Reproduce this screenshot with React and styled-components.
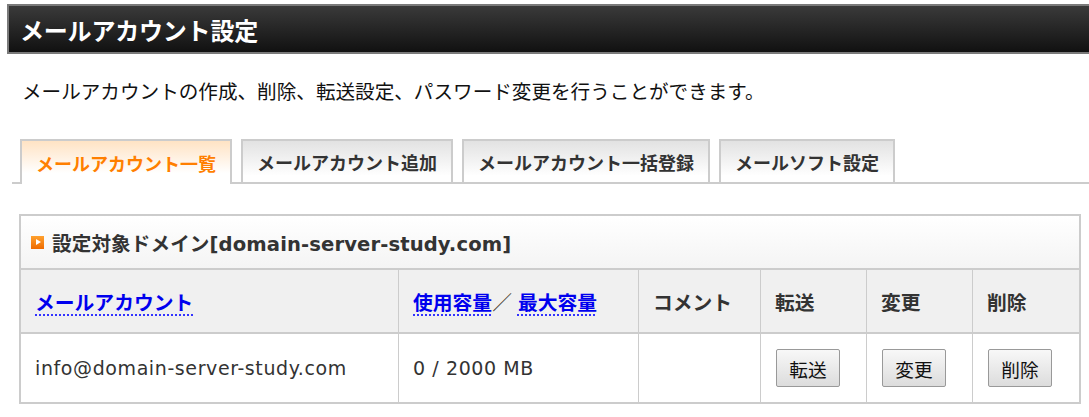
import React from 'react'
import styled, { createGlobalStyle } from 'styled-components'

const GlobalStyle = createGlobalStyle`
  html, body {
    margin: 0;
    padding: 0;
    background: #fff;
    overflow: hidden;
  }
  body {
    font-family: "DejaVu Sans", "Noto Sans CJK JP", sans-serif;
    color: #333;
  }
`

const Page = styled.div`
  width: 1089px;
  padding-top: 4px;
`

const TitleBar = styled.div`
  margin-left: 7px;
  margin-right: -20px;
  height: 46px;
  border: 2px solid #7a7a7a;
  background: linear-gradient(#3a3a3a, #111);
  display: flex;
  align-items: center;
  padding-left: 11px;
`

const Title = styled.h1`
  margin: 0;
  font-family: "Noto Sans CJK JP", sans-serif;
  font-size: 24px;
  font-weight: 700;
  color: #fff;
  letter-spacing: -0.2px;
`

const Lead = styled.p`
  margin: 22px 0 0 22px;
  font-family: "Noto Sans CJK JP", sans-serif;
  font-size: 19.6px;
  color: #111;
  line-height: 30px;
`

const TabBar = styled.div`
  margin: 33px 0 0 12px;
  padding-left: 8px;
  display: flex;
  gap: 9px;
  border-bottom: 2px solid #ccc;
  height: 43px;
`

const Tab = styled.div`
  box-sizing: border-box;
  border: 2px solid #ccc;
  border-bottom: none;
  padding: 0 14px;
  display: flex;
  align-items: center;
  font-family: "Noto Sans CJK JP", sans-serif;
  font-size: 18px;
  font-weight: 700;
  color: ${p => (p.$active ? '#ff7f00' : '#333')};
  background: ${p =>
    p.$active
      ? 'linear-gradient(#ffe3c4, #fff 75%)'
      : 'linear-gradient(#e2e2e2, #fff 85%)'};
  margin-bottom: ${p => (p.$active ? '-2px' : '0')};
  height: ${p => (p.$active ? '45px' : '43px')};
`

const Table = styled.div`
  margin: 30px 0 0 19px;
  width: 1062px;
  box-sizing: border-box;
  border: 2px solid #ccc;
`

const Caption = styled.div`
  height: 54px;
  box-sizing: border-box;
  border-bottom: 2px solid #ccc;
  background: linear-gradient(#fff, #f4f4f4);
  display: flex;
  align-items: center;
  gap: 8px;
  padding-left: 10px;
  font-size: 19.6px;
  font-weight: 700;
  color: #333;
`

const CaptionText = styled.span`
  letter-spacing: 0.1px;
`

const Bullet = styled.span`
  width: 13px;
  height: 13px;
  background: linear-gradient(#ffa12e, #ee6a00);
  display: flex;
  align-items: center;
  justify-content: center;
  &::after {
    content: '';
    border-left: 5px solid #fff;
    border-top: 3.5px solid transparent;
    border-bottom: 3.5px solid transparent;
    margin-left: 1px;
  }
`

const Row = styled.div`
  display: grid;
  grid-template-columns: 377px 240px 122px 106px 106px 1fr;
  height: ${p => p.$h}px;
  background: ${p => (p.$head ? '#f0f0f0' : '#fff')};
  & + & {
    border-top: 2px solid #ccc;
  }
`

const Cell = styled.div`
  display: flex;
  align-items: center;
  padding-left: 14px;
  font-size: 19px;
  letter-spacing: 0.6px;
  color: #333;
  & + & {
    border-left: 1px solid #ccc;
  }
`

const HeadText = styled.span`
  font-family: "Noto Sans CJK JP", sans-serif;
  font-size: 19.8px;
  font-weight: 700;
  letter-spacing: 0;
  color: #333;
`

const SortLink = styled.a`
  font-family: "Noto Sans CJK JP", sans-serif;
  font-size: 19.8px;
  font-weight: 700;
  letter-spacing: 0;
  color: #0000ee;
  text-decoration: underline dotted #3333ff;
  text-underline-offset: 5px;
  text-decoration-thickness: 2px;
`

const Slash = styled.span`
  font-family: "Noto Sans CJK JP", sans-serif;
  font-size: 19.8px;
  letter-spacing: 0;
  color: #4a4030;
  margin-right: 6px;
`

const ActionButton = styled.button`
  width: 64px;
  height: 38px;
  margin-left: 1px;
  border: 1px solid #999;
  border-radius: 2px;
  background: linear-gradient(#f8f8f8, #dcdcdc);
  font-family: "Noto Sans CJK JP", sans-serif;
  font-size: 18.67px;
  letter-spacing: 0;
  color: #111;
  padding: 0;
`

export default function App() {
  return (
    <Page>
      <GlobalStyle />
      <TitleBar>
        <Title>メールアカウント設定</Title>
      </TitleBar>
      <Lead>メールアカウントの作成、削除、転送設定、パスワード変更を行うことができます。</Lead>
      <TabBar>
        <Tab $active>メールアカウント一覧</Tab>
        <Tab>メールアカウント追加</Tab>
        <Tab>メールアカウント一括登録</Tab>
        <Tab>メールソフト設定</Tab>
      </TabBar>
      <Table>
        <Caption>
          <Bullet />
          <CaptionText>設定対象ドメイン[domain-server-study.com]</CaptionText>
        </Caption>
        <Row $head $h={62}>
          <Cell><SortLink href="#">メールアカウント</SortLink></Cell>
          <Cell>
            <SortLink href="#">使用容量</SortLink>
            <Slash>／</Slash>
            <SortLink href="#">最大容量</SortLink>
          </Cell>
          <Cell><HeadText>コメント</HeadText></Cell>
          <Cell><HeadText>転送</HeadText></Cell>
          <Cell><HeadText>変更</HeadText></Cell>
          <Cell><HeadText>削除</HeadText></Cell>
        </Row>
        <Row $h={68}>
          <Cell>info@domain-server-study.com</Cell>
          <Cell>0 / 2000 MB</Cell>
          <Cell />
          <Cell><ActionButton>転送</ActionButton></Cell>
          <Cell><ActionButton>変更</ActionButton></Cell>
          <Cell><ActionButton>削除</ActionButton></Cell>
        </Row>
      </Table>
    </Page>
  )
}
